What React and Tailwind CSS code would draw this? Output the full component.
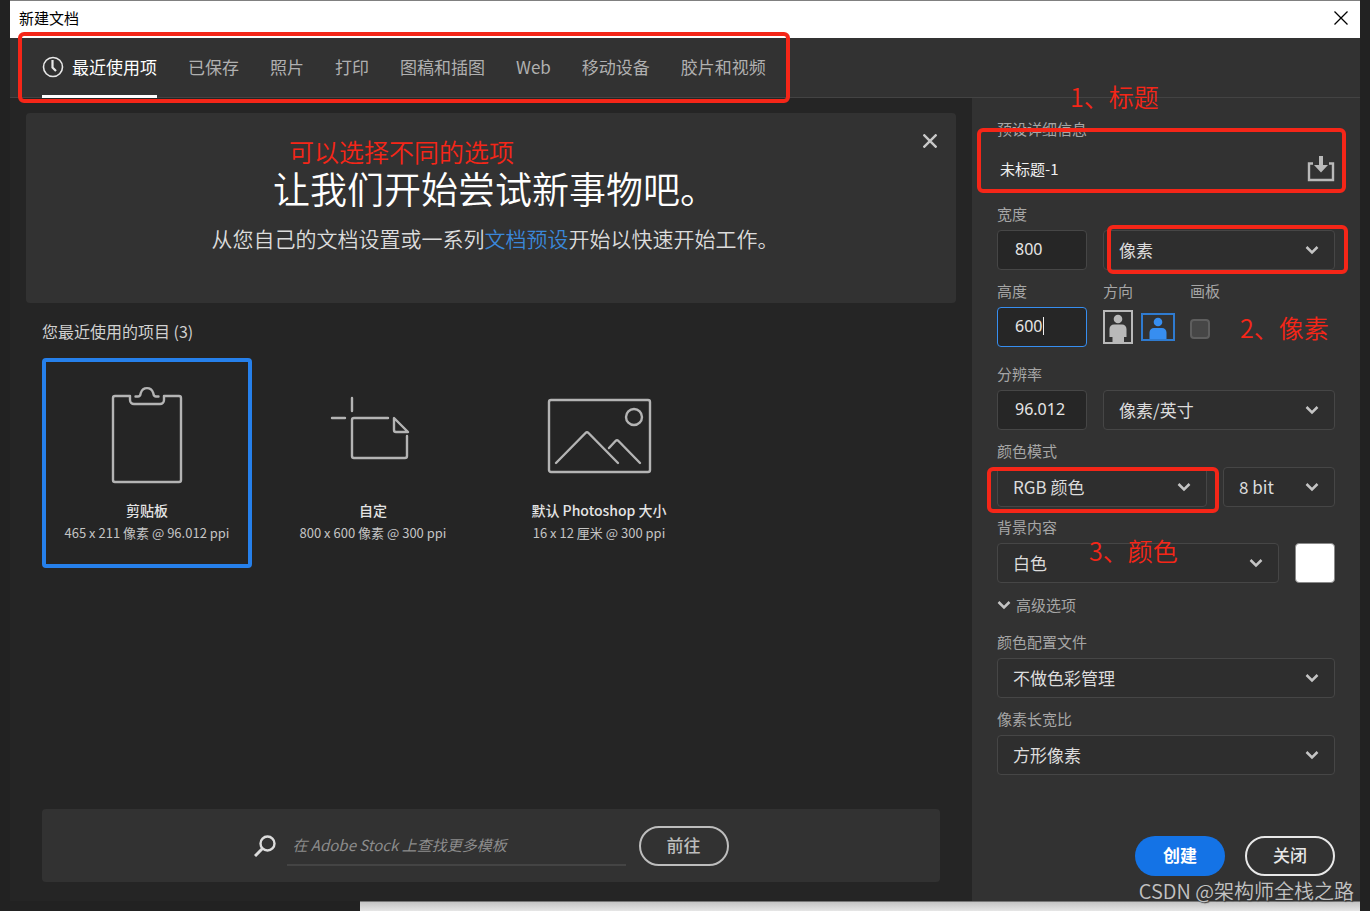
import { useState } from 'react';

const TABS = ['最近使用项', '已保存', '照片', '打印', '图稿和插图', 'Web', '移动设备', '胶片和视频'];

const RECENT = [
  { name: '剪贴板', detail: '465 x 211 像素 @ 96.012 ppi', Icon: ClipboardIcon },
  { name: '自定', detail: '800 x 600 像素 @ 300 ppi', Icon: CustomIcon },
  { name: '默认 Photoshop 大小', detail: '16 x 12 厘米 @ 300 ppi', Icon: PhotoIcon },
];

/* ---------- Icons ---------- */

function ClockIcon() {
  return (
    <svg width="22" height="22" viewBox="0 0 22 22" fill="none" stroke="#e8e8e8" aria-hidden="true">
      <circle cx="11" cy="11" r="9.5" strokeWidth="1.6" />
      <path d="M10.5 4v7.5l3.5 3.5" strokeWidth="2.2" />
    </svg>
  );
}

function CloseIcon({ size, weight }) {
  return (
    <svg width={size} height={size} viewBox="0 0 14 14" fill="none" stroke="currentColor" strokeWidth={weight} aria-hidden="true">
      <path d="M0.5 0.5l13 13M13.5 0.5l-13 13" />
    </svg>
  );
}

function ChevronIcon({ className }) {
  return (
    <svg className={className} width="14" height="10" viewBox="0 0 14 10" fill="none" stroke="#c4c4c4" strokeWidth="2.5" aria-hidden="true">
      <path d="M1.5 2l5.5 5.5L12.5 2" />
    </svg>
  );
}

function SaveIcon() {
  return (
    <svg width="28" height="26" viewBox="0 0 28 26" fill="none" aria-hidden="true">
      <path d="M6 7.500H2V24h24V7.500h-4" stroke="#b9b9b9" strokeWidth="2.400" />
      <path d="M12 0h4v9h5L14 16.500 7 9h5z" fill="#b9b9b9" />
    </svg>
  );
}

function PortraitIcon() {
  return (
    <svg width="30" height="34" viewBox="0 0 30 34" aria-hidden="true">
      <rect x="1" y="1" width="28" height="32" fill="none" stroke="#b9b9b9" strokeWidth="2" />
      <circle cx="15" cy="9" r="4.300" fill="#b9b9b9" />
      <path d="M11 14.500h8a4.500 4.500 0 0 1 4.500 4.500v8H21v6H9.500v-6H6.500v-8A4.500 4.500 0 0 1 11 14.500z" fill="#b9b9b9" />
    </svg>
  );
}

function LandscapeIcon() {
  return (
    <svg width="34" height="28" viewBox="0 0 34 28" aria-hidden="true">
      <rect x="1" y="1" width="32" height="26" fill="none" stroke="#2f7bd0" strokeWidth="2" />
      <circle cx="17" cy="9" r="4.300" fill="#378ef0" />
      <path d="M13 15h8a4.500 4.500 0 0 1 4.500 4.500V26h-17v-6.500A4.500 4.500 0 0 1 13 15z" fill="#378ef0" />
    </svg>
  );
}

function SearchIcon() {
  return (
    <svg width="22" height="22" viewBox="0 0 22 22" fill="none" stroke="#dcdcdc" aria-hidden="true">
      <circle cx="13.500" cy="8.500" r="7" strokeWidth="2.400" />
      <path d="M8.500 13.500l-7.500 7.500" strokeWidth="3" />
    </svg>
  );
}

function ClipboardIcon() {
  return (
    <svg width="110" height="110" viewBox="0 0 110 110" fill="none" stroke="#b4b4b4" strokeWidth="2.400" strokeLinecap="round" strokeLinejoin="round" aria-hidden="true">
      <path d="M38 16H23a2 2 0 0 0-2 2v82a2 2 0 0 0 2 2h64a2 2 0 0 0 2-2V18a2 2 0 0 0-2-2H72v4a4 4 0 0 1-4 4H42a4 4 0 0 1-4-4v-4" />
      <path d="M43.500 16.500h2.500c3 0 2-2 3-4a6.300 6.300 0 0 1 12 0c1 2 0 4 3 4h2.500" />
    </svg>
  );
}

function CustomIcon() {
  return (
    <svg width="110" height="110" viewBox="0 0 110 110" fill="none" stroke="#b4b4b4" strokeWidth="2.400" strokeLinecap="round" strokeLinejoin="round" aria-hidden="true">
      <path d="M34 18v13M14 38h13" />
      <path d="M70 38H36a2 2 0 0 0-2 2v36a2 2 0 0 0 2 2h51a2 2 0 0 0 2-2V56" />
      <path d="M76 38v12a2 2 0 0 0 2 2h12z" />
    </svg>
  );
}

function PhotoIcon() {
  return (
    <svg width="110" height="110" viewBox="0 0 110 110" fill="none" stroke="#b4b4b4" strokeWidth="2.400" strokeLinecap="round" strokeLinejoin="round" aria-hidden="true">
      <rect x="5" y="20" width="101" height="72" rx="2" />
      <circle cx="90" cy="37" r="8" />
      <path d="M12 83l29.500-30q1.500-1.500 3 0L74 83" />
      <path d="M65 68l6.500-7q1.500-1.500 3 0L96 83" />
    </svg>
  );
}

/* ---------- Form pieces ---------- */

function Label({ htmlFor, children }) {
  return (
    <label htmlFor={htmlFor} className="block text-[15px] leading-[22px] text-[#a6a6a6]">
      {children}
    </label>
  );
}

function Select({ id, label, options, className }) {
  return (
    <div className={`relative ${className}`}>
      <select
        id={id}
        aria-label={label}
        className="h-10 w-full appearance-none rounded border border-[#464646] bg-[#2e2e2e] pl-[15px] pr-10 text-[17px] text-[#dcdcdc] outline-none"
      >
        {options.map((option) => (
          <option key={option}>{option}</option>
        ))}
      </select>
      <ChevronIcon className="pointer-events-none absolute right-4 top-[15px]" />
    </div>
  );
}

function NumberBox({ id, value, onChange, active }) {
  return (
    <input
      id={id}
      type="text"
      value={value}
      onChange={(e) => onChange(e.target.value)}
      className={`h-10 w-[90px] rounded border bg-[#262626] pb-[2px] pl-[17px] font-['Noto_Sans',sans-serif] text-base text-[#e6e6e6] outline-none ${
        active ? 'border-[#378ef0]' : 'border-[#464646]'
      }`}
    />
  );
}

/* ---------- Red notes drawn over the dialog ---------- */

function NoteBox({ className }) {
  return <div className={`pointer-events-none absolute z-10 rounded-md border-4 border-[#f52618] ${className}`} />;
}

function NoteText({ className, children }) {
  return (
    <span className={`pointer-events-none absolute z-10 whitespace-nowrap text-[25px] font-[350] leading-7 text-[#f52618] ${className}`}>
      {children}
    </span>
  );
}

/* ---------- Sections ---------- */

function TitleBar() {
  return (
    <header className="flex h-[38px] items-center justify-between border-t border-[#808080] bg-white pb-[3px] pl-[9px] pr-3 text-black">
      <h1 className="text-[15px]">新建文档</h1>
      <button type="button" aria-label="关闭窗口">
        <CloseIcon size={14} weight={1.3} />
      </button>
    </header>
  );
}

function TabBar({ tab, setTab }) {
  return (
    <nav className="relative flex h-[60px] gap-[31px] border-b border-[#434343] bg-[#323232] pl-8">
      {TABS.map((name, i) => (
        <button
          key={name}
          type="button"
          onClick={() => setTab(i)}
          className={`-mb-px flex items-center gap-2 border-b-[3px] text-[17px] ${
            tab === i ? 'border-white text-white' : 'border-transparent text-[#b0b0b0]'
          }`}
        >
          {i === 0 && <ClockIcon />}
          {name}
        </button>
      ))}
      <NoteBox className="-top-[6px] left-2 h-[71px] w-[772px]" />
    </nav>
  );
}

function Banner() {
  return (
    <section className="relative rounded bg-[#323232] pb-[51px] pl-2 pt-[55px] text-center">
      <NoteText className="left-[263px] top-6">可以选择不同的选项</NoteText>
      <button type="button" aria-label="关闭提示" className="absolute right-[19px] top-[21px] text-[#c8c8c8]">
        <CloseIcon size={14} weight={2.4} />
      </button>
      <h2 className="text-[37px] font-[350] leading-[40px] text-white">让我们开始尝试新事物吧。</h2>
      <p className="mt-4 text-[21px] font-[350] leading-7 text-[#dcdcdc]">
        从您自己的文档设置或一系列
        <a href="#presets" className="text-[#3a87d9]">文档预设</a>
        开始以快速开始工作。
      </p>
    </section>
  );
}

function RecentItems({ selected, setSelected }) {
  return (
    <section className="mt-4 px-4">
      <h3 className="text-base leading-6 text-[#d0d0d0]">您最近使用的项目 (3)</h3>
      <div className="mt-[15px] flex flex-wrap gap-4">
        {RECENT.map(({ name, detail, Icon }, i) => (
          <button
            key={name}
            type="button"
            onClick={() => setSelected(i)}
            className={`flex h-[210px] w-[210px] flex-col items-center rounded border-4 pt-[18px] ${
              selected === i ? 'border-[#2680eb]' : 'border-transparent'
            }`}
          >
            <Icon />
            <span className="mt-2 whitespace-nowrap text-sm font-medium leading-6 text-[#e4e4e4]">{name}</span>
            <span className="whitespace-nowrap text-[13px] leading-[22px] text-[#c4c4c4]">{detail}</span>
          </button>
        ))}
      </div>
    </section>
  );
}

function StockSearch() {
  return (
    <form className="mx-4 mt-auto flex h-[73px] items-center justify-center rounded-sm bg-[#323232]" onSubmit={(e) => e.preventDefault()}>
      <SearchIcon />
      <input
        type="text"
        aria-label="在 Adobe Stock 上查找更多模板"
        placeholder="在 Adobe Stock 上查找更多模板"
        className="ml-[11px] mr-[13px] h-10 w-[339px] border-b-2 border-[#444444] bg-transparent pl-[6px] text-[15px] italic text-[#d0d0d0] outline-none placeholder:text-[#8c8c8c]"
      />
      <button type="submit" className="h-10 w-[90px] rounded-full border-2 border-[#bdbdbd] pb-[2px] text-[17px] font-medium text-[#bdbdbd]">
        前往
      </button>
    </form>
  );
}

function PresetDetails() {
  const [title, setTitle] = useState('未标题-1');
  const [width, setWidth] = useState('800');
  const [height, setHeight] = useState('600');
  const [resolution, setResolution] = useState('96.012');
  const [artboard, setArtboard] = useState(false);

  return (
    <aside className="relative flex w-[388px] shrink-0 flex-col bg-[#323232] px-[25px] pb-[25px] pt-5">
      <NoteText className="-top-4 left-[98px]">1、标题</NoteText>

      <Label htmlFor="doc-title">预设详细信息</Label>
      <div className="relative mt-[9px] flex h-10 items-center justify-between">
        <input
          id="doc-title"
          type="text"
          value={title}
          onChange={(e) => setTitle(e.target.value)}
          className="min-w-0 flex-1 bg-transparent pl-[3px] text-[15px] text-[#f0f0f0] outline-none"
        />
        <button type="button" aria-label="存储预设">
          <SaveIcon />
        </button>
        <NoteBox className="-bottom-1 -left-5 -right-[11px] -top-[21px]" />
      </div>

      <div className="mt-[14px]">
        <Label htmlFor="doc-width">宽度</Label>
        <div className="relative mt-[5px] flex gap-4">
          <NumberBox id="doc-width" value={width} onChange={setWidth} />
          <Select className="flex-1" label="单位" options={['像素', '英寸', '厘米', '毫米']} />
          <NoteBox className="-bottom-1 -right-[13px] -top-[5px] left-[110px]" />
        </div>
      </div>

      <div className="relative mt-[10px] flex">
        <div className="w-[106px]">
          <Label htmlFor="doc-height">高度</Label>
          <div className="relative mt-[5px]">
            <NumberBox id="doc-height" value={height} onChange={setHeight} active />
            <span className="absolute left-[46px] top-[10px] h-[18px] w-px bg-[#f0f0f0]" />
          </div>
        </div>
        <div className="w-[87px]">
          <span className="block text-[15px] leading-[22px] text-[#a6a6a6]">方向</span>
          <div className="mt-[5px] flex h-10 items-center gap-2">
            <button type="button" aria-label="纵向">
              <PortraitIcon />
            </button>
            <button type="button" aria-label="横向">
              <LandscapeIcon />
            </button>
          </div>
        </div>
        <div>
          <Label htmlFor="artboard">画板</Label>
          <input
            id="artboard"
            type="checkbox"
            checked={artboard}
            onChange={(e) => setArtboard(e.target.checked)}
            className="mt-[17px] block h-5 w-5 appearance-none rounded border-2 border-[#5e5e5e] bg-[#464646] checked:bg-[#2680eb]"
          />
        </div>
        <NoteText className="left-[243px] top-[33px]">2、像素</NoteText>
      </div>

      <div className="mt-4">
        <Label htmlFor="doc-resolution">分辨率</Label>
        <div className="mt-[5px] flex gap-4">
          <NumberBox id="doc-resolution" value={resolution} onChange={setResolution} />
          <Select className="flex-1" label="分辨率单位" options={['像素/英寸', '像素/厘米']} />
        </div>
      </div>

      <div className="mt-[10px]">
        <Label htmlFor="color-mode">颜色模式</Label>
        <div className="relative mt-[5px] flex gap-4">
          <Select id="color-mode" className="flex-1" options={['RGB 颜色', 'CMYK 颜色', '灰度']} />
          <Select className="w-28" label="位深度" options={['8 bit', '16 bit', '32 bit']} />
          <NoteBox className="-bottom-[6px] -left-[10px] right-[116px] top-0" />
        </div>
      </div>

      <div className="relative mt-[9px]">
        <Label htmlFor="background">背景内容</Label>
        <div className="mt-[5px] flex gap-4">
          <Select id="background" className="flex-1" options={['白色', '黑色', '透明']} />
          <button type="button" aria-label="背景颜色" className="h-10 w-10 rounded-sm border border-[#8a8a8a] bg-white" />
        </div>
        <NoteText className="left-[92px] top-5">3、颜色</NoteText>
      </div>

      <button type="button" className="mt-[11px] flex items-center gap-[5px] text-[15px] leading-[22px] text-[#a6a6a6]">
        <ChevronIcon />
        高级选项
      </button>

      <div className="mt-[15px]">
        <Label htmlFor="color-profile">颜色配置文件</Label>
        <Select id="color-profile" className="mt-[5px]" options={['不做色彩管理', '工作中的 RGB']} />
      </div>

      <div className="mt-[10px]">
        <Label htmlFor="pixel-ratio">像素长宽比</Label>
        <Select id="pixel-ratio" className="mt-[5px]" options={['方形像素', '自定']} />
      </div>

      <div className="mt-auto flex justify-end gap-5">
        <button type="button" className="h-10 w-[90px] rounded-full bg-[#1473e6] pb-[2px] text-[17px] font-bold text-white">
          创建
        </button>
        <button type="button" className="h-10 w-[90px] rounded-full border-2 border-[#e8e8e8] pb-[2px] text-[17px] font-medium text-[#e8e8e8]">
          关闭
        </button>
      </div>
    </aside>
  );
}

export default function App() {
  const [tab, setTab] = useState(0);
  const [selected, setSelected] = useState(0);

  return (
    <div className="relative flex min-h-screen flex-col bg-[#222222] px-[10px] font-['Noto_Sans_CJK_SC','Noto_Sans',sans-serif]">
      <TitleBar />
      <TabBar tab={tab} setTab={setTab} />
      <div className="flex flex-1">
        <main className="flex min-w-0 flex-1 flex-col bg-[#252525] px-4 pb-[19px] pt-[15px]">
          <Banner />
          <RecentItems selected={selected} setSelected={setSelected} />
          <StockSearch />
        </main>
        <PresetDetails />
      </div>
      {/* Strip of the page behind the dialog */}
      <div className="ml-[350px] h-[10px] border-t border-[#777777] bg-gradient-to-b from-[#c4c4c4] to-[#e6e6e6]" />
      <span className="absolute bottom-1 right-4 z-20 text-xl font-[350] leading-8 text-[#c2c2c2] [text-shadow:1px_1px_1px_#333333]">
        CSDN @架构师全栈之路
      </span>
    </div>
  );
}
